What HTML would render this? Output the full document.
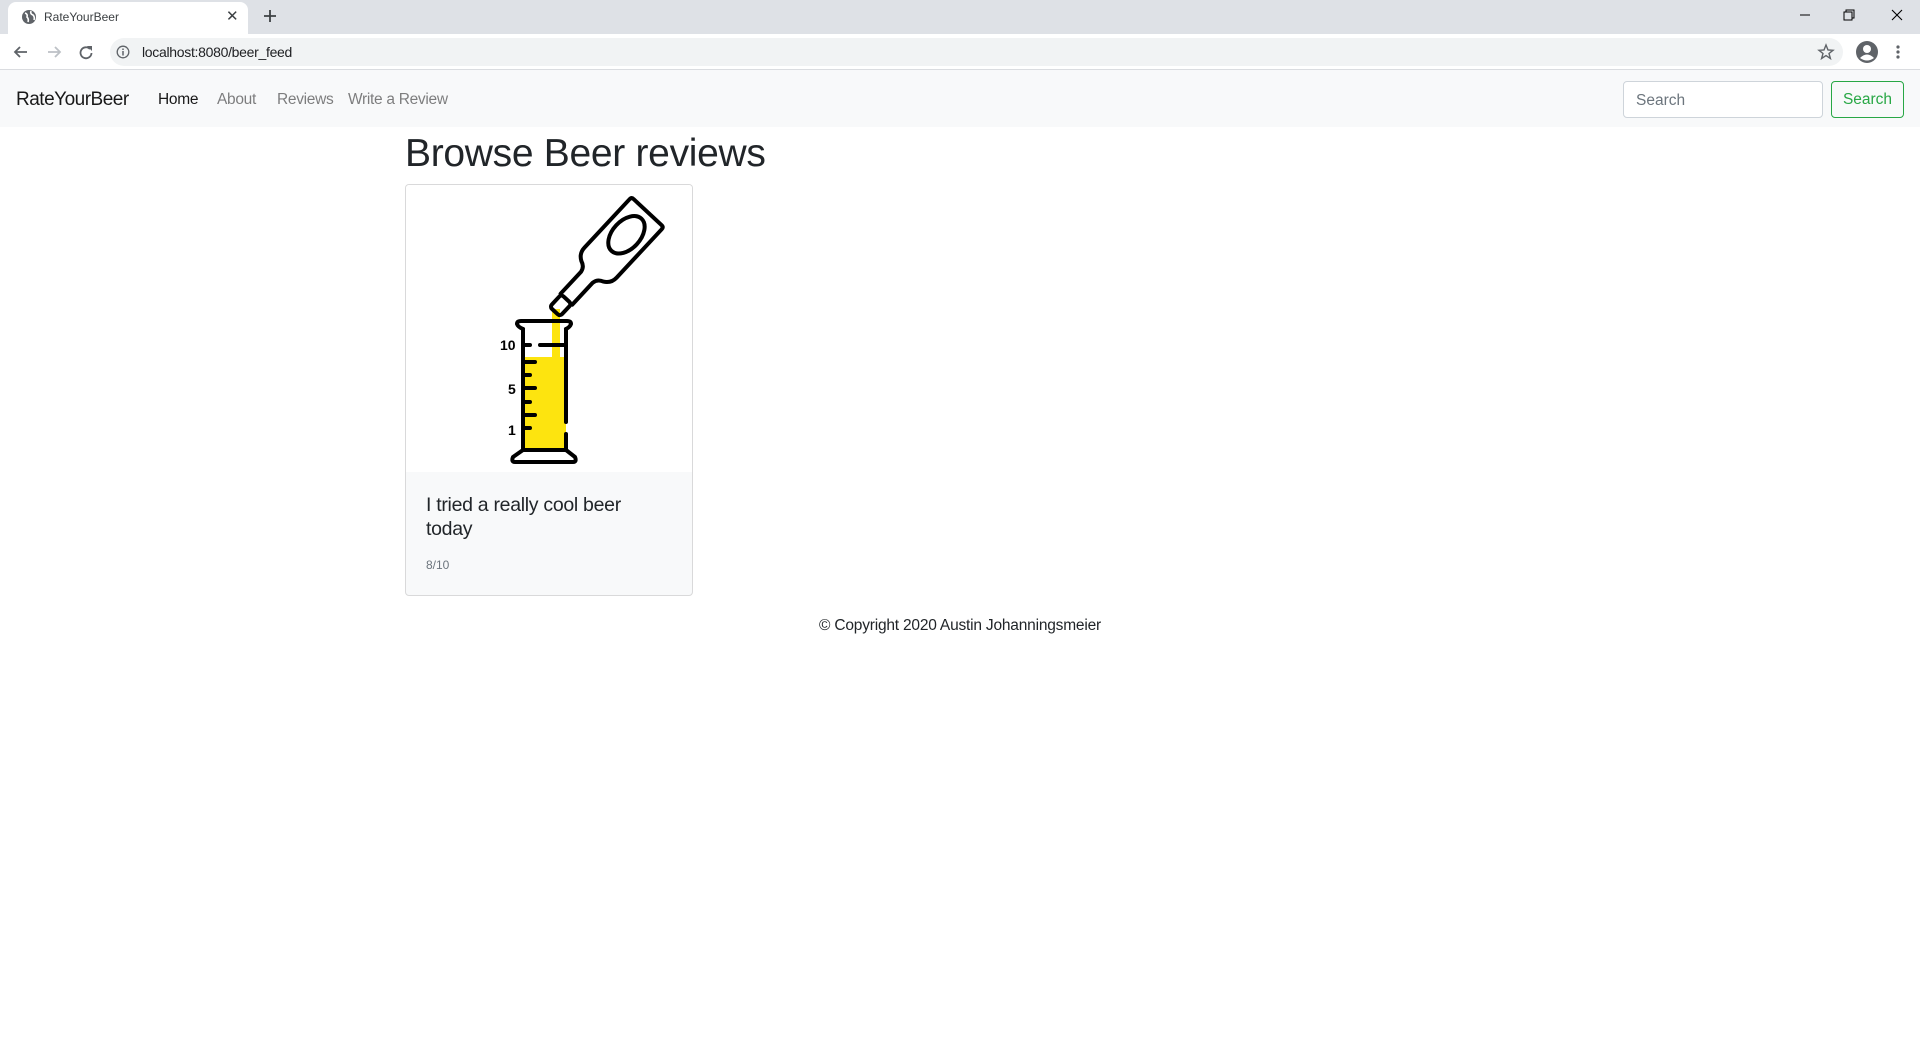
<!DOCTYPE html>
<html><head><meta charset="utf-8"><style>
*{box-sizing:border-box;margin:0;padding:0}
body{width:1920px;height:1040px;overflow:hidden;background:#fff;font-family:"Liberation Sans",sans-serif;color:#212529;position:relative}
.abs{position:absolute}
.tabs{left:0;top:0;width:1920px;height:34px;background:#dee1e6}
.tab{left:8px;top:2px;width:240px;height:32px;background:#fff;border-radius:8px 8px 0 0}
.addr{left:0;top:34px;width:1920px;height:36px;background:#fff;border-bottom:1px solid #dadce0}
.omni{left:110px;top:38px;width:1733px;height:28px;background:#f1f3f4;border-radius:14px}
.nav{left:0;top:70px;width:1920px;height:57px;background:#f8f9fa}
.link{top:91px;font-size:15.5px;color:rgba(0,0,0,.5);letter-spacing:-0.3px}
</style></head><body>
<div class="abs tabs"></div>
<div class="abs tab"></div>
<svg class="abs" style="left:20px;top:8px" width="18" height="18" viewBox="0 0 18 18"><circle cx="9" cy="9" r="7" fill="#5f6368"/><path d="M5 5 Q8 6 7 9 Q9 11 8 14 M11 3 Q10 6 13 7 Q15 9 14 12" stroke="#fff" stroke-width="1.6" fill="none"/></svg>
<div class="abs" style="left:44px;top:10px;font-size:12px;color:#3c4043">RateYourBeer</div>
<div class="abs" style="left:226px;top:7px;font-size:15px;color:#3c4043">✕</div>
<svg class="abs" style="left:263px;top:9px" width="14" height="14"><path d="M7 1V13M1 7H13" stroke="#3c4043" stroke-width="1.8"/></svg>
<svg class="abs" style="left:1798px;top:8px" width="110" height="14"><path d="M2 7H12" stroke="#000" stroke-width="1"/><rect x="46" y="4" width="8" height="8" fill="none" stroke="#000"/><path d="M48 4V2H56V10H54" fill="none" stroke="#000"/><path d="M94 2L104 12M104 2L94 12" stroke="#000" stroke-width="1.1"/></svg>
<div class="abs addr"></div>
<svg class="abs" style="left:12px;top:44px" width="90" height="16"><path d="M15 8H3M8 3L3 8L8 13" stroke="#5f6368" stroke-width="1.8" fill="none"/><path d="M36 8H48M43 3L48 8L43 13" stroke="#bdc1c6" stroke-width="1.8" fill="none"/><path d="M78 5A5.5 5.5 0 1 0 79.5 9" stroke="#5f6368" stroke-width="1.8" fill="none"/><path d="M75 2L80 2L80 7Z" fill="#5f6368"/></svg>
<div class="abs omni"></div>
<svg class="abs" style="left:116px;top:45px" width="14" height="14"><circle cx="7" cy="7" r="5.8" fill="none" stroke="#5f6368" stroke-width="1.3"/><path d="M7 6V10.5M7 3.5V5" stroke="#5f6368" stroke-width="1.5"/></svg>
<div class="abs" style="left:142px;top:44px;font-size:14px;color:#202124;letter-spacing:-0.3px">localhost:8080/beer_feed</div>
<svg class="abs" style="left:1817px;top:43px" width="18" height="18" viewBox="0 0 18 18"><path d="M9 2L11 7L16 7.3L12 10.5L13.4 15.5L9 12.6L4.6 15.5L6 10.5L2 7.3L7 7Z" fill="none" stroke="#5f6368" stroke-width="1.4"/></svg>
<svg class="abs" style="left:1855px;top:40px" width="24" height="24"><circle cx="12" cy="12" r="11" fill="#5f6368"/><circle cx="12" cy="9" r="4" fill="#fff"/><path d="M5 18Q12 11 19 18Q12 23 5 18Z" fill="#fff"/></svg>
<svg class="abs" style="left:1895px;top:44px" width="6" height="16"><circle cx="3" cy="3" r="1.6" fill="#5f6368"/><circle cx="3" cy="8" r="1.6" fill="#5f6368"/><circle cx="3" cy="13" r="1.6" fill="#5f6368"/></svg>

<div class="abs nav"></div>
<div class="abs" style="left:16px;top:89px;font-size:19px;color:rgba(0,0,0,.9);letter-spacing:-0.5px">RateYourBeer</div>
<div class="abs link" style="left:158px;color:rgba(0,0,0,.9)">Home</div>
<div class="abs link" style="left:217px">About</div>
<div class="abs link" style="left:277px">Reviews</div>
<div class="abs link" style="left:348px">Write a Review</div>
<div class="abs" style="left:1623px;top:81px;width:200px;height:37px;background:#fff;border:1px solid #ced4da;border-radius:4px;padding:10px 12px;font-size:15.5px;color:#6c757d">Search</div>
<div class="abs" style="left:1831px;top:81px;width:73px;height:37px;border:1px solid #28a745;border-radius:4px;padding:9px 0;text-align:center;font-size:15.5px;color:#28a745">Search</div>

<div class="abs" style="left:405px;top:130px;font-size:39px;line-height:48px;font-weight:500;letter-spacing:-0.3px">Browse Beer reviews</div>
<div class="abs" style="left:405px;top:184px;width:288px;height:412px;border:1px solid rgba(0,0,0,.125);border-radius:4px;background:#f8f9fa;overflow:hidden">
<svg width="288" height="288" style="display:block;margin:-1px 0 0 -1px;background:#fff" viewBox="0 0 288 288">
<rect x="118" y="173" width="43" height="94" fill="#fde40f"/>
<rect x="147" y="125" width="8" height="50" fill="#fde40f"/>
<g stroke="#000" stroke-width="4" fill="none" stroke-linecap="round" stroke-linejoin="round">
<path d="M118 145V266M161 145V238M161 250V266"/>
<path d="M118 145Q113 143 112 140Q112 137 116 137H162Q166 137 166 140Q165 143 161 145"/>
<path d="M118 266L108 273Q106 278 110 278H168Q172 278 170 273L161 266Z"/>
<path d="M118 161H125M135 161H161"/>
<path d="M118 178H130M118 191H125M118 204H130M118 218H125M118 231H130M118 244H125"/>
<g transform="translate(156 121) rotate(-47)">
<rect x="-9" y="-7" width="17" height="14" rx="3"/>
<path d="M8 -8H38Q44 -9 46 -15Q50 -22 58 -22H124Q127 -22 127 -19V19Q127 22 124 22H58Q50 22 46 15Q44 9 38 8H8"/>
<ellipse cx="96" cy="0" rx="22" ry="14"/>
</g>
</g>
<g font-family="Liberation Sans,sans-serif" font-weight="bold" font-size="14" fill="#000">
<text x="95" y="166">10</text><text x="103" y="210">5</text><text x="103" y="251">1</text>
</g>
</svg>
<div style="padding:21px 20px 0 20px;font-size:19.5px;line-height:24px;font-weight:500;letter-spacing:-0.3px">I tried a really cool beer today</div>
<div style="padding:17px 20px 0;font-size:12px;color:#6c757d">8/10</div>
</div>
<div class="abs" style="left:0;top:617px;width:1920px;text-align:center;font-size:15.5px;letter-spacing:-0.2px">© Copyright 2020 Austin Johanningsmeier</div>
</body></html>
